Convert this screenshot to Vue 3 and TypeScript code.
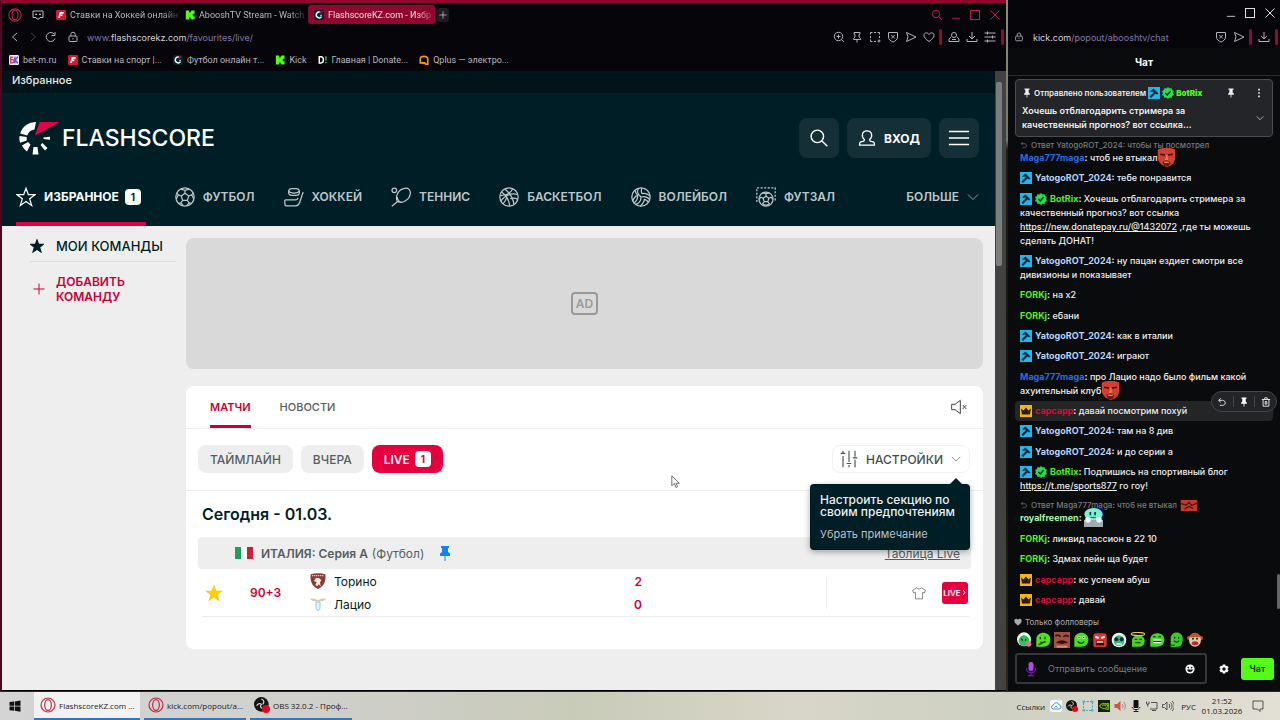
<script setup lang="ts">
import { ref } from 'vue'

interface Message {
  user: string
  tone: string
  badges?: string[]
  text?: string
  link?: string
  tail?: string
  emote?: string
  reply?: string
  replyEmote?: string
  hovered?: boolean
}

const tabs = [
  { icon: 'fav-f', title: 'Ставки на Хоккей онлайн', active: false },
  { icon: 'fav-k', title: 'AbooshTV Stream - Watch', active: false },
  { icon: 'fav-fs', title: 'FlashscoreKZ.com - Избр', active: true },
]

const bookmarks = [
  { icon: 'fav-bk', title: 'bet-m.ru' },
  { icon: 'fav-f', title: 'Ставки на спорт |...' },
  { icon: 'fav-fs', title: 'Футбол онлайн т...' },
  { icon: 'fav-k', title: 'Kick' },
  { icon: 'fav-d', title: 'Главная | Donate...' },
  { icon: 'fav-q', title: 'Qplus — электро...' },
]

const pageTools = [
  { icon: 'zoom', label: 'Масштаб' },
  { icon: 'pinned', label: 'Закрепить' },
  { icon: 'snapshot', label: 'Снимок' },
  { icon: 'shield', label: 'Блокировщик' },
  { icon: 'send', label: 'Отправить' },
  { icon: 'heart', label: 'В избранное' },
]
const appTools = [
  { icon: 'profile', label: 'Профиль' },
  { icon: 'download', label: 'Загрузки' },
  { icon: 'sliders', label: 'Настройки браузера' },
]

const sports = [
  { icon: 'football', title: 'ФУТБОЛ' },
  { icon: 'hockey', title: 'ХОККЕЙ' },
  { icon: 'tennis', title: 'ТЕННИС' },
  { icon: 'basketball', title: 'БАСКЕТБОЛ' },
  { icon: 'volleyball', title: 'ВОЛЕЙБОЛ' },
  { icon: 'futsal', title: 'ФУТЗАЛ' },
]

const teams = [
  { icon: 'torino', name: 'Торино', score: 2 },
  { icon: 'lazio', name: 'Лацио', score: 0 },
]

const messages: Message[] = [
  { user: 'Maga777maga', tone: 'blue', text: 'чтоб не втыкал', emote: 'emote-red', reply: 'Ответ YatogoROT_2024: чтобы ты посмотрел' },
  { user: 'YatogoROT_2024', tone: 'sky', badges: ['badge-mod'], text: 'тебе понравится' },
  { user: 'BotRix', tone: 'green', badges: ['badge-mod', 'badge-ok'], text: 'Хочешь отблагодарить стримера за качественный прогноз? вот ссылка', link: 'https://new.donatepay.ru/@1432072', tail: ',где ты можешь сделать ДОНАТ!' },
  { user: 'YatogoROT_2024', tone: 'sky', badges: ['badge-mod'], text: 'ну пацан ездиет смотри все дивизионы и показывает' },
  { user: 'FORKj', tone: 'green', text: 'на х2' },
  { user: 'FORKj', tone: 'green', text: 'ебани' },
  { user: 'YatogoROT_2024', tone: 'sky', badges: ['badge-mod'], text: 'как в италии' },
  { user: 'YatogoROT_2024', tone: 'sky', badges: ['badge-mod'], text: 'играют' },
  { user: 'Maga777maga', tone: 'blue', text: 'про Лацио надо было фильм какой ахуительный клуб', emote: 'emote-red' },
  { user: 'capcapp', tone: 'red', badges: ['badge-crown'], text: 'давай посмотрим похуй', hovered: true },
  { user: 'YatogoROT_2024', tone: 'sky', badges: ['badge-mod'], text: 'там на 8 див' },
  { user: 'YatogoROT_2024', tone: 'sky', badges: ['badge-mod'], text: 'и до серии а' },
  { user: 'BotRix', tone: 'green', badges: ['badge-mod', 'badge-ok'], text: 'Подпишись на спортивный блог', link: 'https://t.me/sports877', tail: 'го гоу!' },
  { user: 'royalfreemen', tone: 'mint', emote: 'emote-mint', reply: 'Ответ Maga777maga: чтоб не втыкал', replyEmote: 'emote-band' },
  { user: 'FORKj', tone: 'green', text: 'ликвид пассион в 22 10' },
  { user: 'FORKj', tone: 'green', text: '3дмах пейн ща будет' },
  { user: 'capcapp', tone: 'red', badges: ['badge-crown'], text: 'кс успеем абуш' },
  { user: 'capcapp', tone: 'red', badges: ['badge-crown'], text: 'давай' },
]

const quickEmotes = ['q-pink', 'q-think', 'q-photo', 'q-smile', 'q-angry', 'q-cool', 'q-angel', 'q-grin', 'q-wave', 'q-monkey']

const tasks = [
  { icon: 'opera', title: 'FlashscoreKZ.com ...', active: true },
  { icon: 'opera', title: 'kick.com/popout/a...', active: false },
  { icon: 'obs', title: 'OBS 32.0.2 - Проф...', active: false },
]
const tray = ['t-cloud', 'obs', 't-snip', 't-nv', 't-mute', 't-mic', 't-net', 't-vol']

const draft = ref('')
const showHint = ref(true)
</script>

<template>
  <svg class="defs" aria-hidden="true">
    <symbol id="opera" viewBox="0 0 24 24"><circle cx="12" cy="12" r="10.5" fill="none" stroke="#c4284c" stroke-width="1.8" /><ellipse cx="12" cy="12" rx="5" ry="8.2" fill="none" stroke="#c4284c" stroke-width="1.8" /></symbol>
    <symbol id="gx" viewBox="0 0 24 24"><path d="M2 4h20v13h-6l-2 3h-4l-2-3H2z" /><path d="M6 11h4M14 11h4M8 9v3M16 9v3" /></symbol>
    <symbol id="fav-f" viewBox="0 0 24 24"><rect width="24" height="24" rx="3" fill="#d31836" stroke="none" /><path d="M9 5h10l-1 4h-6l-.5 2H16l-1 3.500h-4.500L9.500 19H5z" fill="#fff" stroke="none" /></symbol>
    <symbol id="fav-k" viewBox="0 0 24 24"><path d="M2 1h8v5h3V3.500h2V1h8v8h-3v2.500h-2v1h2V15h3v8h-8v-2.500h-2V18h-3v5H2z" fill="#53fc18" stroke="none" /></symbol>
    <symbol id="fav-fs" viewBox="0 0 24 24"><rect width="24" height="24" rx="5" fill="#06262d" stroke="none" /><path d="M14 5a7 7 0 1 0 4 11" fill="none" stroke="#fff" stroke-width="3.500" /><path d="M14 3h8l-8 8z" fill="#c8003c" stroke="none" /><path d="M15 13h4" stroke="#fff" stroke-width="2" /></symbol>
    <symbol id="fav-bk" viewBox="0 0 24 24"><rect width="24" height="24" rx="3" fill="#ece8ff" stroke="none" /><path d="M10 5H4v14h4a4 4 0 0 0 0-8H4" fill="none" stroke="#d22d52" stroke-width="3" /><path d="M14 4v16M21 4l-6 8 6 8" fill="none" stroke="#6048d8" stroke-width="3.500" /></symbol>
    <symbol id="fav-d" viewBox="0 0 24 24"><path d="M3 4h4c8 0 8 15 0 15H3z" fill="none" stroke="#fff" stroke-width="3.500" /><path d="M19 3v10M19 16v4" stroke="#36a351" stroke-width="4" /></symbol>
    <symbol id="fav-q" viewBox="0 0 24 24"><path d="M3 19V10c0-9 18-9 18 0v12h-5l-2-3z" fill="none" stroke="#f7941d" stroke-width="4" /><path d="M8 20h5" stroke="#f7941d" stroke-width="4" /></symbol>
    <symbol id="back" viewBox="0 0 24 24"><path d="M16 4l-9 8 9 8" /></symbol>
    <symbol id="fwd" viewBox="0 0 24 24"><path d="M8 4l9 8-9 8" /></symbol>
    <symbol id="reload" viewBox="0 0 24 24"><path d="M20 15a9 9 0 1 1-1-8M20 2v7h-7" /></symbol>
    <symbol id="lock" viewBox="0 0 24 24"><rect x="4" y="10" width="16" height="11" rx="2" /><path d="M7.500 10V7a4.500 4.500 0 0 1 9 0v3M12 14v3" /></symbol>
    <symbol id="search" viewBox="0 0 24 24"><circle cx="10" cy="10" r="7.500" /><path d="M15.500 15.500L22 22" /></symbol>
    <symbol id="minimize" viewBox="0 0 24 24"><path d="M2 20h20" /></symbol>
    <symbol id="maximize" viewBox="0 0 24 24"><rect x="3" y="3" width="18" height="18" /></symbol>
    <symbol id="close" viewBox="0 0 24 24"><path d="M3 3l18 18M21 3L3 21" /></symbol>
    <symbol id="zoom" viewBox="0 0 24 24"><circle cx="11" cy="11" r="8.500" /><path d="M17 17l5 5M7 11h8M11 7v8" /></symbol>
    <symbol id="pinned" viewBox="0 0 24 24"><path d="M6 3h12v3l-2 1v5l3 3v2H5v-2l3-3V7L6 6zM12 17v6" /></symbol>
    <symbol id="snapshot" viewBox="0 0 24 24"><path d="M3 7V3h4M10 3h4M17 3h4v4M21 10v4M3 10v4M3 17v4h4M10 21h4M17 20h6M20 17v6" /></symbol>
    <symbol id="shield" viewBox="0 0 24 24"><path d="M3 3h18v9c0 5-4 8-9 10-5-2-9-5-9-10zM8.500 8l7 7M15.500 8l-7 7" /></symbol>
    <symbol id="send" viewBox="0 0 24 24"><path d="M3 3l19 9-19 9 3-9z" /></symbol>
    <symbol id="heart" viewBox="0 0 24 24"><path d="M12 21C5 16 2 13 2 8.500 2 3 9 2 12 7c3-5 10-4 10 1.500C22 13 19 16 12 21z" /></symbol>
    <symbol id="profile" viewBox="0 0 24 24"><circle cx="12" cy="8" r="5" /><path d="M6 12l-4 4v5h20v-5l-4-4M8 17h8" /></symbol>
    <symbol id="download" viewBox="0 0 24 24"><path d="M12 2v13M6 10l6 6 6-6M2 16v5h20v-5" /></symbol>
    <symbol id="sliders" viewBox="0 0 24 24"><path d="M1 4h22M1 12h22M1 20h22M7 1v6M17 9v6M7 17v6" /></symbol>

    <symbol id="logo" viewBox="0 0 45 34">
      <path d="M20 1A16 16 0 0 0 4.200 12.500l7 2A9 9 0 0 1 18.500 8.500zM3.500 15l7.200 1v3.500l-6.500 2.200c-.8-2-1-4-.7-6.700zM6 24.500l6-3.500 2.500 2.500-3.500 7c-2-1.500-3.500-3-5-6zM17.500 26h4l1 7.500h-6zM24.500 24l2-2 5 5-2.500 2.500zM27.500 16.500l6.500-.8v3l-6.500-.8z" fill="#fff" stroke="none" />
      <path d="M23.500 1h20L19 14.500z" fill="#e6004a" stroke="none" />
    </symbol>
    <symbol id="user" viewBox="0 0 24 24"><path d="M8.500 14C4 10 5 2.500 12 2.500S20 10 15.500 14l.5 2 5 1.500c1 1 1 3 1 4H2c0-1 0-3 1-4L8 16z" /></symbol>
    <symbol id="menu" viewBox="0 0 24 24"><path d="M1 5h22M1 12h22M1 19h22" /></symbol>
    <symbol id="star" viewBox="0 0 24 24"><path d="M12 1.500l2.800 7.700h8l-6.400 5 2.400 8L12 17.500 5.200 22.200l2.400-8-6.400-5h8z" /></symbol>
    <symbol id="football" viewBox="0 0 24 24"><circle cx="12" cy="12" r="11" /><path d="M12 7.500l4.500 3.300-1.700 5.200H9.200l-1.700-5.200zM12 7.500V4M16.500 10.800l3.500-1.500M14.800 16l2.200 3M9.200 16L7 19M7.500 10.800L4 9.300M7 2.500L12 4l5-1.500M22 7l-2 2.300 2.500 5M19.500 19.500L17 19l-3 3.500M10 22.500L7 19l-3 .5M1.500 14.500l2.500-5.200L2 7" /></symbol>
    <symbol id="hockey" viewBox="0 0 24 24"><rect x="5.500" y="2" width="13" height="8" rx="4" /><path d="M5.500 5c2 3 11 3 13 0M1 15.500h12.500c2 0 3-1 3.500-2.500M23 6l-4 12c-1 3-2 4.500-5 4.500H3c-1.500 0-2-1-2-2.500v-4.500" /></symbol>
    <symbol id="tennis" viewBox="0 0 24 24"><circle cx="4" cy="4" r="2.800" /><path d="M7.500 17C5 12 8 4 15 2c6-2 9 2 8 7-1 6-9 11-14 9zM8 17.500L1 23M7.500 12c.5 4 2 6 6 6.500" /></symbol>
    <symbol id="basketball" viewBox="0 0 24 24"><circle cx="12" cy="12" r="11" /><path d="M7 2.500c5 4 10 11 11 18.500M3 6c6 4 9 9 10 17M1.500 10c6 .5 12-2 15-8M2 17c5-7 12-10 20.500-8M5 20c2-2 3-4 4-7M22.500 15c-3-2-6-2-9-1" /></symbol>
    <symbol id="volleyball" viewBox="0 0 24 24"><circle cx="12" cy="12" r="11" /><path d="M12 12c-4-3-5-7-3-10.500M12 12c4-1 8 0 10.500 3M12 12c0 5-2 8-7 9M13 8c-1-2-1-4 0-7M13 8c4-1 7 0 10 3M8 10c-3 1-5 4-6 7M8 10c0 4-1 7-4 9M16 14.500c0 3-2 6-5 8.500M16 14.500c2 1 4 2 5 4M8 10C6 8 5 6 5 4" /></symbol>
    <symbol id="futsal" viewBox="0 0 24 24"><path d="M1 18V1h22v17" stroke-dasharray="2.500 1.800" /><circle cx="12" cy="14.500" r="8.500" /><path d="M12 11l3.500 2.500-1.300 4H9.800l-1.300-4zM12 11V8M15.500 13.500l3-1.500M14.200 17.500l2 3M9.800 17.500l-2 3M8.500 13.500l-3-1.500M8 7l4 1 4-1M18.500 12l1.500 3M5.500 12L4 15M7.800 20.500l4.200 1.500 4.200-1.500" /></symbol>
    <symbol id="chev" viewBox="0 0 24 24"><path d="M2 7l10 10L22 7" /></symbol>
    <symbol id="plus" viewBox="0 0 24 24"><path d="M12 1v22M1 12h22" /></symbol>
    <symbol id="muted" viewBox="0 0 24 24"><path d="M1 8h5l8-6v20l-8-6H1zM17.500 9l5.500 6M23 9l-5.500 6" /></symbol>
    <symbol id="tune" viewBox="0 0 24 24"><path d="M4 1v3M4 8v15M1 4.500h6M12 1v15M12 20v3M9 18h6M20 1v8M20 13v10M17 10.500h6" /></symbol>
    <symbol id="pushpin" viewBox="0 0 24 30"><path d="M4 0h16v4h-2v8l4 3v5H2v-5l4-3V4H4zM11 20h2v10h-2z" fill="#1384ec" stroke="none" /></symbol>
    <symbol id="shirt" viewBox="0 0 24 24"><path d="M8 3L1 7.500 3 12l3-1v11h12V11l3 1 2-4.500L16 3c-2 3-6 3-8 0z" /></symbol>
    <symbol id="torino" viewBox="0 0 24 24"><path d="M1 2c7-2 15-2 22 0 1 9-1 18-11 22C2 20 0 11 1 2z" fill="#8a3b32" stroke="none" /><path d="M3 4h18" stroke="#d9c8be" stroke-width="2" stroke-dasharray="2 1" /><path d="M8 18l2-4-4-2 3-5 5 1 3 3-2 3 1 6-3-3-2 3z" fill="#f6efe8" stroke="none" /></symbol>
    <symbol id="lazio" viewBox="0 0 24 24"><path d="M0 4c5-1 8 0 12 2 4-2 7-3 12-2-2 3-5 4-8 4H8C5 8 2 7 0 4z" fill="#d8cfa0" stroke="none" /><path d="M9 9h6v8c0 2-1 4-3 5-2-1-3-3-3-5z" fill="#e9f6fb" stroke="#8cc8e4" stroke-width="1.500" /></symbol>

    <symbol id="pin" viewBox="0 0 24 24"><path d="M6 1h12v3h-2v7l3 3v2h-6v7h-2v-7H5v-2l3-3V4H6z" fill="currentColor" stroke="none" /></symbol>
    <symbol id="dots" viewBox="0 0 24 24"><path d="M10 2h4v4h-4zM10 10h4v4h-4zM10 18h4v4h-4z" fill="currentColor" stroke="none" /></symbol>
    <symbol id="reply" viewBox="0 0 24 24"><path d="M9 3L4 8l5 5M4 8h9c9 0 9 12 0 12H7" /></symbol>
    <symbol id="trash" viewBox="0 0 24 24"><path d="M2 6h20M9 5V2h6v3M5 6v16h14V6M10 11h4v6h-4z" /></symbol>
    <symbol id="badge-mod" viewBox="0 0 24 24"><rect width="24" height="24" fill="#24b6e8" stroke="none" /><path d="M11 3l10 10-3 2-3-2-9 9-3-3 9-9-3-1-4 1v-2z" fill="#07293a" stroke="none" /></symbol>
    <symbol id="badge-ok" viewBox="0 0 24 24"><path d="M12 0l3 3 4-1 1 4 4 2-2 4 2 4-4 2-1 4-4-1-3 3-3-3-4 1-1-4-4-2 2-4-2-4 4-2 1-4 4 1z" fill="#22e050" stroke="none" /><path d="M6.500 12l4 4 7-8" fill="none" stroke="#06310f" stroke-width="3" /></symbol>
    <symbol id="badge-crown" viewBox="0 0 24 24"><rect width="24" height="24" fill="#f5b511" stroke="none" /><path d="M2 7l5 4 5-6 5 6 5-4-2 12H4z" fill="#2a1c02" stroke="none" /></symbol>
    <symbol id="emote-red" viewBox="0 0 24 24"><path d="M1 2C8-1 17-1 23 2v11c-1 6-5 10-10 11C6 23 2 18 1 13z" fill="#d3402f" stroke="none" /><path d="M4 8l6 1M14 9l6-1" stroke="#4b0d0a" stroke-width="2" /><path d="M12 9l1 5h-3" fill="none" stroke="#ff8263" stroke-width="1.500" /><path d="M7 18c3-3 7-3 10 0l-2 5H9z" fill="#6b1c1b" stroke="none" /><path d="M9 18h6" stroke="#f0937b" stroke-width="1.500" /></symbol>
    <symbol id="emote-mint" viewBox="0 0 24 24"><rect x="12" width="12" height="14" fill="#101a7a" stroke="none" /><ellipse cx="12" cy="8" rx="11.500" ry="8" fill="#7ff0cf" stroke="none" /><path d="M8 5v4M14 5v4" stroke="#0a3a30" stroke-width="2" /><path d="M8 12h7" stroke="#1c7a60" stroke-width="1.500" /><rect y="15" width="24" height="9" fill="#a4aab0" stroke="none" /><circle cx="5" cy="15" r="3.500" fill="#e8fff8" stroke="none" /><circle cx="19" cy="15" r="3.500" fill="#e8fff8" stroke="none" /></symbol>
    <symbol id="emote-band" viewBox="0 0 36 24"><rect width="36" height="24" fill="#c23a2c" stroke="none" /><path d="M0 8l12 3 6-6 6 7 12-5M8 20l10-6 9 5" fill="none" stroke="#5a1410" stroke-width="3" /></symbol>
    <symbol id="q-pink" viewBox="0 0 24 24"><circle cx="12" cy="11" r="10.500" fill="#e9f8ef" stroke="none" /><circle cx="12" cy="13" r="8" fill="#2fc15b" stroke="none" /><path d="M8 10l2 3M15 10l-1 3" stroke="#073815" stroke-width="2" /><circle cx="19" cy="18" r="4" fill="#ea6aa8" stroke="none" /></symbol>
    <symbol id="q-think" viewBox="0 0 24 24"><path d="M2 22V11C2-2 23-2 23 11c0 9-6 12-13 11z" fill="#53e01e" stroke="none" /><path d="M8 7v4M15 7v4M8 15c3 2 5 1 8-1M5 19l6-2" fill="none" stroke="#0d4a0a" stroke-width="2" /></symbol>
    <symbol id="q-photo" viewBox="0 0 24 24"><rect width="24" height="24" fill="#a34e46" stroke="none" /><path d="M2 6c3-2 6-1 8 1M14 7c3-2 6-2 8 0" fill="none" stroke="#3a1512" stroke-width="2.500" /><path d="M3 16c5-5 13-5 18 0l-9 2z" fill="#30120f" stroke="none" /><path d="M4 22h16" stroke="#d58c7d" stroke-width="3" /></symbol>
    <symbol id="q-smile" viewBox="0 0 24 24"><path d="M2 22V11C2-2 23-2 23 11c0 9-6 12-13 11z" fill="#45e01e" stroke="none" /><path d="M7 8h4M14 8h4" stroke="#fff" stroke-width="3.500" /><path d="M8 8h2M15 8h2M7 14c3 4 7 4 10 0" fill="none" stroke="#0d4a0a" stroke-width="2" /></symbol>
    <symbol id="q-angry" viewBox="0 0 24 24"><rect x="2" y="2" width="20" height="21" rx="4" fill="#d8352f" stroke="none" /><path d="M5 7l5 2M19 7l-5 2" stroke="#fff" stroke-width="3" /><rect x="6" y="13" width="12" height="7" fill="#3a0806" stroke="none" /><path d="M7 15h10" stroke="#fff" stroke-width="2" /></symbol>
    <symbol id="q-cool" viewBox="0 0 24 24"><circle cx="12" cy="12" r="11" fill="#e9f8ef" stroke="none" /><circle cx="12" cy="13" r="8" fill="#36b77e" stroke="none" /><circle cx="8" cy="11" r="3" fill="#18233a" stroke="none" /><circle cx="16" cy="11" r="3" fill="#18233a" stroke="none" /><path d="M8 18h8" stroke="#fff" stroke-width="2" /></symbol>
    <symbol id="q-angel" viewBox="0 0 24 24"><path d="M3 22V13C3 2 22 2 22 13c0 8-6 10-12 9z" fill="#4ed021" stroke="none" /><ellipse cx="12" cy="3" rx="10" ry="2.500" fill="none" stroke="#e7c260" stroke-width="1.800" /><path d="M7 11h4M14 11h4M8 16h8" stroke="#0d4a0a" stroke-width="2" /></symbol>
    <symbol id="q-grin" viewBox="0 0 24 24"><path d="M2 22V11C2-1 23-1 23 11c0 9-6 12-13 11z" fill="#45d628" stroke="none" /><rect x="6" y="11" width="13" height="6" rx="2" fill="#e8ffe0" stroke="none" /><path d="M6 7h4M14 7h4M6 14h13" stroke="#0d4a0a" stroke-width="1.800" /></symbol>
    <symbol id="q-wave" viewBox="0 0 24 24"><path d="M4 23V9C5-2 22-2 22 10c0 8-3 12-8 12z" fill="#3ccb2c" stroke="none" /><path d="M10 7v3M16 7v3M9 13c2 3 6 3 8 0M2 20h8" fill="none" stroke="#0d4a0a" stroke-width="2" /></symbol>
    <symbol id="q-monkey" viewBox="0 0 24 24"><circle cx="3" cy="9" r="3" fill="#b3563c" stroke="none" /><circle cx="21" cy="9" r="3" fill="#b3563c" stroke="none" /><ellipse cx="12" cy="12" rx="9" ry="10" fill="#e6c99c" stroke="none" /><path d="M3 8c3-9 15-9 18 0" fill="#b3563c" stroke="none" /><circle cx="9" cy="10" r="1.500" fill="#222" stroke="none" /><circle cx="15" cy="10" r="1.500" fill="#222" stroke="none" /><ellipse cx="12" cy="17" rx="5" ry="3" fill="#c22a2a" stroke="none" /></symbol>
    <symbol id="mic" viewBox="0 0 24 30"><rect x="7" y="1" width="10" height="18" rx="5" fill="#b04ae0" stroke="none" /><path d="M3 13c0 13 18 13 18 0M12 23v5M6 28h12" fill="none" stroke="#7a18b8" stroke-width="2.500" /></symbol>
    <symbol id="smiley" viewBox="0 0 24 24"><circle cx="12" cy="12" r="11" fill="#fff" stroke="none" /><circle cx="8" cy="8.500" r="2" fill="#111" stroke="none" /><circle cx="16" cy="8.500" r="2" fill="#111" stroke="none" /><path d="M5 13h14c-1 8-13 8-14 0z" fill="#111" stroke="none" /></symbol>
    <symbol id="gear" viewBox="0 0 24 24"><path d="M9 1h6l1 4 4-1 3 5-3 3 3 3-3 5-4-1-1 4H9l-1-4-4 1-3-5 3-3-3-3 3-5 4 1zM12 8a4 4 0 1 0 0 8 4 4 0 0 0 0-8z" fill="#fff" fill-rule="evenodd" stroke="none" /></symbol>
    <symbol id="heart-fill" viewBox="0 0 24 24"><path d="M12 23C5 17 1 13 1 8c0-7 9-8 11-2 2-6 11-5 11 2 0 5-4 9-11 15z" fill="#aaa" stroke="none" /></symbol>

    <symbol id="windows" viewBox="0 0 24 24"><path d="M1 4l9-1v8.500H1zM11.500 2.800L23 1v10.500H11.500zM1 13h9v8.500l-9-1zM11.500 13H23v10.500l-11.500-1.800z" fill="#111" stroke="none" /></symbol>
    <symbol id="obs" viewBox="0 0 24 24"><circle cx="11" cy="11" r="11" fill="#151515" stroke="none" /><path d="M11 3c4 1 5 5 2 8M4 13c2-4 6-4 8-1M15 17c-3 1-6-1-5-5" fill="none" stroke="#d8d8d8" stroke-width="1.800" /><circle cx="18" cy="18" r="6" fill="#e3091b" stroke="none" /></symbol>
    <symbol id="t-cloud" viewBox="0 0 24 24"><rect width="24" height="24" rx="4" fill="#f7fbff" stroke="none" /><path d="M7 18a4 4 0 0 1 0-8c1-6 10-6 11 0a4 4 0 0 1 0 8zM9 15l3-3 3 3" fill="none" stroke="#3185e6" stroke-width="1.800" /></symbol>
    <symbol id="t-snip" viewBox="0 0 24 24"><rect x="3" y="3" width="18" height="18" fill="none" stroke="#47a0c8" stroke-width="2" stroke-dasharray="4 2.500" /><path d="M1 1h5v5H1zM18 18h5v5h-5zM1 18h5v5H1zM18 1h5v5h-5z" fill="#5db3d6" stroke="none" /></symbol>
    <symbol id="t-nv" viewBox="0 0 24 24"><rect width="24" height="24" fill="#16200f" stroke="none" /><path d="M3 12c5-7 12-7 17 0-5 7-12 7-17 0zM9 12c1-3 5-3 6 0M13 7h8v11h-6" fill="none" stroke="#6db200" stroke-width="2.500" /></symbol>
    <symbol id="t-mute" viewBox="0 0 24 24"><path d="M1 8h5l7-6v20l-7-6H1z" fill="#d4553f" stroke="none" /><path d="M16 8c3 2 3 6 0 8M19 4c5 4 5 12 0 16" fill="none" stroke="#9a8f86" stroke-width="2" /></symbol>
    <symbol id="t-mic" viewBox="0 0 24 24"><rect x="7" y="0" width="10" height="16" rx="2" fill="#111" stroke="none" /><path d="M4 14c2 7 14 7 16 0M12 18v4M7 23h10" fill="none" stroke="#222" stroke-width="2" /></symbol>
    <symbol id="t-net" viewBox="0 0 24 24"><path d="M1 3v5h5V3M3.500 8v5M10 5h12v13H8M12 21h8" fill="none" stroke="#444" stroke-width="1.800" /></symbol>
    <symbol id="t-vol" viewBox="0 0 24 24"><path d="M1 9h4l5-5v16l-5-5H1zM14 8c2 2 2 6 0 8M17 5c4 4 4 10 0 14M20 2c6 6 6 14 0 20" fill="none" stroke="#333" stroke-width="1.600" /></symbol>
    <symbol id="t-note" viewBox="0 0 24 24"><path d="M2 2h20v16h-6v5l-5-5H2z" fill="none" stroke="#333" stroke-width="1.600" /></symbol>
  </svg>

  <div class="desktop">
    <main class="windows">
      <section class="browser" aria-label="Браузер">
        <div class="tabbar">
          <button class="plain" aria-label="Меню Opera"><svg class="i14"><use href="#opera" /></svg></button>
          <button class="plain gx" aria-label="GX"><svg class="i12"><use href="#gx" /></svg></button>
          <div class="tabs">
            <a v-for="t in tabs" :key="t.title" href="#" class="tab" :class="{ active: t.active }">
              <svg class="i10"><use :href="'#' + t.icon" /></svg><span>{{ t.title }}</span>
            </a>
          </div>
          <button class="plain add" aria-label="Новая вкладка"><svg class="i8"><use href="#plus" /></svg></button>
          <div class="winctl crimson">
            <button class="plain" aria-label="Поиск"><svg class="i12"><use href="#search" /></svg></button>
            <button class="plain" aria-label="Свернуть"><svg class="i10"><use href="#minimize" /></svg></button>
            <button class="plain" aria-label="Развернуть"><svg class="i12"><use href="#maximize" /></svg></button>
            <button class="plain" aria-label="Закрыть"><svg class="i12"><use href="#close" /></svg></button>
          </div>
        </div>

        <div class="address">
          <button class="plain" aria-label="Назад"><svg class="i12"><use href="#back" /></svg></button>
          <button class="plain dim" aria-label="Вперёд"><svg class="i12"><use href="#fwd" /></svg></button>
          <button class="plain" aria-label="Обновить"><svg class="i12"><use href="#reload" /></svg></button>
          <svg class="i12 lock"><use href="#lock" /></svg>
          <a class="url" href="#">www.<b>flashscorekz.com</b>/favourites/live/</a>
          <div class="tools">
            <button v-for="t in pageTools" :key="t.icon" class="plain" :aria-label="t.label"><svg class="i12"><use :href="'#' + t.icon" /></svg></button>
            <i class="bar"></i>
            <button v-for="t in appTools" :key="t.icon" class="plain" :aria-label="t.label"><svg class="i12"><use :href="'#' + t.icon" /></svg></button>
            <i class="bar"></i>
          </div>
        </div>

        <nav class="bookmarks" aria-label="Закладки">
          <a v-for="b in bookmarks" :key="b.title" href="#"><svg class="i10"><use :href="'#' + b.icon" /></svg>{{ b.title }}</a>
        </nav>

        <div class="viewport">
          <div class="page">
            <div class="strip">Избранное</div>
            <header class="head">
              <div class="brandrow">
                <a class="brand" href="#"><svg class="mark"><use href="#logo" /></svg>FLASHSCORE</a>
                <div class="actions">
                  <button class="hbtn" aria-label="Поиск по сайту"><svg class="i20"><use href="#search" /></svg></button>
                  <button class="hbtn login"><svg class="i18"><use href="#user" /></svg>ВХОД</button>
                  <button class="hbtn" aria-label="Меню"><svg class="i22"><use href="#menu" /></svg></button>
                </div>
              </div>
              <nav class="sports" aria-label="Виды спорта">
                <a class="sport current" href="#"><svg class="i20"><use href="#star" /></svg>ИЗБРАННОЕ<span class="count">1</span></a>
                <a v-for="s in sports" :key="s.icon" class="sport" href="#"><svg class="i20"><use :href="'#' + s.icon" /></svg>{{ s.title }}</a>
                <button class="sport more">БОЛЬШЕ<svg class="i12"><use href="#chev" /></svg></button>
              </nav>
            </header>

            <div class="body">
              <aside class="side">
                <h2><svg class="i14 solid"><use href="#star" /></svg>МОИ КОМАНДЫ</h2>
                <button class="addteam"><svg class="i12"><use href="#plus" /></svg><span>ДОБАВИТЬ<br>КОМАНДУ</span></button>
              </aside>
              <div class="content">
                <div class="ad"><span>AD</span></div>
                <section class="card">
                  <div class="cardtabs">
                    <a href="#" class="on">МАТЧИ</a>
                    <a href="#">НОВОСТИ</a>
                    <button class="plain mute" aria-label="Звук"><svg class="i16"><use href="#muted" /></svg></button>
                  </div>
                  <div class="filters">
                    <button class="chip">ТАЙМЛАЙН</button>
                    <button class="chip">ВЧЕРА</button>
                    <button class="chip live">LIVE<span class="count">1</span></button>
                    <div class="settings">
                      <button class="setbtn"><svg class="i18"><use href="#tune" /></svg>НАСТРОЙКИ<svg class="i10 drop"><use href="#chev" /></svg></button>
                      <div v-if="showHint" class="hint" role="tooltip">
                        <p>Настроить секцию по своим предпочтениям</p>
                        <button @click="showHint = false">Убрать примечание</button>
                      </div>
                    </div>
                  </div>
                  <h1>Сегодня - 01.03.</h1>
                  <div class="league">
                    <i class="flag"></i>
                    <b>ИТАЛИЯ: Серия А</b><span>(Футбол)</span>
                    <button class="plain" aria-label="Закрепить турнир"><svg class="push"><use href="#pushpin" /></svg></button>
                    <a href="#">Таблица Live</a>
                  </div>
                  <article class="match">
                    <button class="plain fav" aria-label="Убрать из избранного"><svg class="i20"><use href="#star" /></svg></button>
                    <span class="minute">90+3</span>
                    <div class="teams">
                      <div v-for="t in teams" :key="t.name" class="team"><svg class="i16"><use :href="'#' + t.icon" /></svg>{{ t.name }}</div>
                    </div>
                    <div class="scores"><b v-for="t in teams" :key="t.name">{{ t.score }}</b></div>
                    <div class="extras">
                      <svg class="i14 shirt"><use href="#shirt" /></svg>
                      <a class="livebtn" href="#">LIVE<svg><use href="#fwd" /></svg></a>
                    </div>
                  </article>
                </section>
              </div>
            </div>
          </div>
          <div class="scroll" aria-hidden="true"><i></i></div>
        </div>
      </section>

      <section class="chat" aria-label="Чат Kick">
        <div class="winctl top">
          <button class="plain" aria-label="Свернуть"><svg class="i10"><use href="#minimize" /></svg></button>
          <button class="plain" aria-label="Развернуть"><svg class="i12"><use href="#maximize" /></svg></button>
          <button class="plain" aria-label="Закрыть"><svg class="i12"><use href="#close" /></svg></button>
        </div>
        <div class="address slim">
          <svg class="i10"><use href="#lock" /></svg>
          <a class="url" href="#"><b>kick.com</b>/popout/abooshtv/chat</a>
          <div class="tools">
            <button class="plain" aria-label="Блокировщик"><svg class="i12"><use href="#shield" /></svg></button>
            <button class="plain" aria-label="Отправить"><svg class="i12"><use href="#send" /></svg></button>
            <i class="bar"></i>
            <button class="plain" aria-label="Загрузки"><svg class="i12"><use href="#download" /></svg></button>
            <i class="bar"></i>
          </div>
        </div>
        <h2 class="title">Чат</h2>

        <div class="feed">
          <div class="pinbox">
            <div class="pinhead">
              <svg class="i10"><use href="#pin" /></svg>Отправлено пользователем
              <svg class="i12"><use href="#badge-mod" /></svg><svg class="i12"><use href="#badge-ok" /></svg><b class="green">BotRix</b>
              <button class="plain first" aria-label="Открепить"><svg class="i10"><use href="#pin" /></svg></button>
              <button class="plain" aria-label="Ещё"><svg class="i10"><use href="#dots" /></svg></button>
            </div>
            <div class="pintext">
              <p>Хочешь отблагодарить стримера за качественный прогноз? вот ссылка…</p>
              <button class="plain" aria-label="Развернуть сообщение"><svg class="i8"><use href="#chev" /></svg></button>
            </div>
          </div>

          <div class="messages">
            <div v-for="(m, n) in messages" :key="n" class="msg" :class="{ hovered: m.hovered }">
              <div v-if="m.reply" class="replyto"><svg class="i8"><use href="#reply" /></svg>{{ m.reply }}<svg v-if="m.replyEmote" class="band"><use :href="'#' + m.replyEmote" /></svg></div>
              <div class="line"><svg v-for="b in m.badges" :key="b" class="badge"><use :href="'#' + b" /></svg><b :class="m.tone">{{ m.user }}</b><b>:</b> {{ m.text }}<template v-if="m.link">{{ ' ' }}<a href="#">{{ m.link }}</a> {{ m.tail }}</template><svg v-if="m.emote" class="emote"><use :href="'#' + m.emote" /></svg></div>
              <div v-if="m.hovered" class="hovertools">
                <button class="plain" aria-label="Ответить"><svg class="i10"><use href="#reply" /></svg></button>
                <button class="plain" aria-label="Закрепить"><svg class="i10"><use href="#pin" /></svg></button>
                <button class="plain" aria-label="Удалить"><svg class="i10"><use href="#trash" /></svg></button>
              </div>
            </div>
          </div>
        </div>

        <div class="followers"><svg class="i8"><use href="#heart-fill" /></svg>Только фолловеры</div>
        <div class="quick">
          <button v-for="q in quickEmotes" :key="q" class="plain" :aria-label="q"><svg><use :href="'#' + q" /></svg></button>
        </div>
        <form class="compose" @submit.prevent>
          <div class="field">
            <svg class="mic"><use href="#mic" /></svg>
            <input v-model="draft" type="text" placeholder="Отправить сообщение" aria-label="Отправить сообщение">
            <button type="button" class="plain" aria-label="Эмоции"><svg class="i10"><use href="#smiley" /></svg></button>
          </div>
          <button type="button" class="plain" aria-label="Настройки чата"><svg class="i10"><use href="#gear" /></svg></button>
          <button class="sendbtn">Чат</button>
        </form>
        <i class="chatscroll" aria-hidden="true"></i>
      </section>
    </main>

    <footer class="taskbar">
      <button class="plain start" aria-label="Пуск"><svg class="i12"><use href="#windows" /></svg></button>
      <button v-for="t in tasks" :key="t.title" class="task" :class="{ active: t.active }"><svg class="i16"><use :href="'#' + t.icon" /></svg>{{ t.title }}</button>
      <div class="tray">
        <span class="links">Ссылки</span>
        <svg v-for="t in tray" :key="t" class="i12"><use :href="'#' + t" /></svg>
        <span class="lang">РУС</span>
        <time><span>21:52</span><span>01.03.2026</span></time>
        <svg class="i12"><use href="#t-note" /></svg>
      </div>
    </footer>

    <svg class="cursor" viewBox="0 0 12 18" aria-hidden="true"><path d="M1 1v12l3-3 2 5 2-1-2-4h4z" fill="#fff" stroke="#555" /></svg>
  </div>
</template>

<style>
body {
  background: #000;
}
</style>

<style scoped>
.defs {
  position: absolute;
  width: 0;
  height: 0;
}
.desktop {
  position: relative;
  display: flex;
  flex-direction: column;
  min-height: 100vh;
  font-family: Inter, "Liberation Sans", sans-serif;
  font-size: 9px;
  color: #ddd;
}
.desktop *,
.desktop *::before {
  box-sizing: border-box;
}
svg {
  display: block;
  flex: none;
  fill: none;
  stroke: currentColor;
  stroke-width: 2;
}
a {
  color: inherit;
  text-decoration: none;
}
button,
input {
  font: inherit;
  color: inherit;
  border: 0;
  padding: 0;
  background: none;
}
h1,
h2,
p {
  margin: 0;
}
.plain {
  display: flex;
  align-items: center;
  justify-content: center;
}
.i8 { width: 8px; height: 8px; }
.i10 { width: 10px; height: 10px; }
.i12 { width: 12px; height: 12px; }
.i14 { width: 14px; height: 14px; }
.i16 { width: 16px; height: 16px; }
.i18 { width: 18px; height: 18px; }
.i20 { width: 20px; height: 20px; }
.i22 { width: 22px; height: 22px; }

.windows {
  flex: 1;
  display: grid;
  grid-template-columns: minmax(0, 1fr) 272px;
  gap: 2px;
  padding-bottom: 1px;
  background: linear-gradient(#8a8a80 0, #77776c 140px, #1c1e16 150px, #12140e 480px, #30281a 100%);
}

/* browser window */
.browser {
  display: flex;
  flex-direction: column;
  background: #060509;
  border-left: 2px solid #4d0820;
  border-top: 3px solid #92052f;
  border-bottom: 1px solid #000;
}
.tabbar {
  display: flex;
  align-items: center;
  height: 23px;
  padding: 0 5px 0 6px;
}
.gx {
  margin: 0 6px 0 10px;
  color: #bbb;
}
.tabs {
  display: flex;
  font-family: Roboto, sans-serif;
}
.tab {
  display: flex;
  align-items: center;
  gap: 4px;
  width: 129px;
  height: 19px;
  padding: 0 6px;
  border-radius: 3px;
  color: #b9b6bf;
}
.tab span {
  white-space: nowrap;
  mask-image: linear-gradient(90deg, #000 85%, #0004);
}
.tab.active {
  width: 127px;
  background: #8f0630;
  color: #f4dbe3;
}
.add {
  width: 12px;
  height: 14px;
  margin-left: 2px;
  background: #1d1b24;
  border-radius: 3px;
}
.winctl {
  display: flex;
  gap: 8px;
  margin-left: auto;
}
.crimson {
  color: #c21b48;
}
.address {
  display: flex;
  align-items: center;
  height: 22px;
  padding-left: 7px;
  gap: 6px;
  color: #b4b2ba;
}
.dim {
  opacity: 0.35;
}
.lock {
  margin: 0 2px 0 4px;
}
.url {
  color: #8078a8;
}
.url b {
  font-weight: 400;
  color: #d2d0d8;
}
.tools {
  display: flex;
  align-items: center;
  gap: 6px;
  margin-left: auto;
}
.bar {
  width: 3px;
  height: 16px;
  margin: 0 0 0 -2px;
  border-radius: 2px;
  background: #8f0a35;
}
.tools .bar:last-child {
  margin: 0 2px 0 -1px;
}
.bookmarks {
  display: flex;
  align-items: center;
  gap: 11px;
  height: 23px;
  padding-left: 7px;
  color: #b9b6bf;
  font-family: Roboto, sans-serif;
}
.bookmarks a {
  display: flex;
  align-items: center;
  gap: 4px;
}

.viewport {
  flex: 1;
  display: flex;
}
.page {
  flex: 1;
  min-width: 0;
  display: flex;
  flex-direction: column;
  background: #eee;
}
.scroll {
  width: 11px;
  padding: 11px 4px 0 1px;
  background: #424242;
}
.scroll i {
  display: block;
  height: 184px;
  border-radius: 2px;
  background: #7d7d7d;
}
.strip {
  height: 22px;
  padding-left: 10px;
  background: #011419;
  color: #e5e8e8;
  font-size: 11px;
  font-weight: 500;
  line-height: 18px;
}
.head {
  padding: 0 16px 0 14px;
  background: #001e26;
  color: #fff;
}
.brandrow {
  display: flex;
  align-items: center;
  justify-content: space-between;
  height: 80px;
  padding-top: 10px;
}
.brand {
  display: flex;
  align-items: center;
  gap: 1px;
  font-size: 23px;
  font-weight: 500;
}
.mark {
  width: 45px;
  height: 34px;
}
.actions {
  display: flex;
  gap: 8px;
}
.hbtn {
  display: flex;
  align-items: center;
  justify-content: center;
  width: 40px;
  height: 40px;
  border-radius: 8px;
  background: #142f36;
}
.hbtn svg {
  stroke-width: 1.7;
}
.login {
  width: 84px;
  gap: 8px;
  font-size: 12px;
  font-weight: 700;
}
.sports {
  display: flex;
  gap: 29px;
  height: 53px;
}
.sport {
  display: flex;
  align-items: center;
  gap: 8px;
  padding-bottom: 6px;
  color: #bcc6c9;
  font-size: 12px;
  font-weight: 600;
}
.sport svg {
  stroke-width: 1.5;
}
.sport.current {
  padding: 4px 5px 6px 0;
  border-bottom: 4px solid #e6003f;
  color: #fff;
  font-weight: 700;
}
.count {
  display: flex;
  align-items: center;
  justify-content: center;
  width: 16px;
  height: 16px;
  border-radius: 4px;
  background: #fff;
  color: #001e26;
  font-size: 10px;
  font-weight: 700;
}
.sport .count {
  margin-left: -2px;
}
.sport.more {
  margin-left: auto;
}

.body {
  flex: 1;
  display: grid;
  grid-template-columns: 146px minmax(0, 1fr);
  gap: 10px;
  padding: 12px 12px 40px 28px;
}
.side h2 {
  display: flex;
  align-items: center;
  gap: 12px;
  height: 24px;
  padding-bottom: 8px;
  border-bottom: 1px solid #ddd;
  color: #001e26;
  font-size: 13px;
  font-weight: 500;
  white-space: nowrap;
}
.solid {
  fill: currentColor;
}
.addteam {
  display: flex;
  align-items: center;
  gap: 11px;
  margin-top: 12px;
  padding-left: 3px;
  color: #c80037;
  font-size: 12px;
  font-weight: 600;
  line-height: 15px;
  text-align: left;
}
.ad {
  display: flex;
  align-items: center;
  justify-content: center;
  height: 131px;
  border-radius: 8px;
  background: #d9d9d9;
}
.ad span {
  padding: 0 3px;
  border: 2px solid #999;
  border-radius: 4px;
  color: #999;
  font-size: 12px;
  font-weight: 600;
  line-height: 19px;
}
.card {
  padding-bottom: 32px;
  margin-top: 17px;
  border-radius: 8px;
  background: #fff;
  color: #001e26;
}
.cardtabs {
  display: flex;
  align-items: stretch;
  gap: 29px;
  height: 43px;
  padding: 0 16px 0 24px;
  border-bottom: 1px solid #eee;
}
.cardtabs a {
  padding-top: 14px;
  color: #555e61;
  font-size: 11px;
  font-weight: 500;
}
.cardtabs .on {
  border-bottom: 3px solid #c80037;
  color: #c80037;
  font-weight: 600;
}
.mute {
  margin-left: auto;
  color: #444;
}
.mute svg {
  stroke-width: 1.5;
}
.filters {
  display: flex;
  gap: 8px;
  height: 62px;
  padding: 16px 13px 16px 12px;
  border-bottom: 1px solid #eee;
}
.chip {
  display: flex;
  align-items: center;
  gap: 5px;
  height: 28px;
  padding: 0 12px;
  border-radius: 8px;
  background: #eee;
  color: #555e61;
  font-size: 12px;
  font-weight: 500;
}
.live {
  background: #e6003f;
  color: #fff;
  font-weight: 600;
}
.live .count {
  color: #c80037;
}
.settings {
  position: relative;
  margin-left: auto;
}
.setbtn {
  display: flex;
  align-items: center;
  gap: 8px;
  height: 28px;
  padding: 0 8px 0 7px;
  border: 1px solid #f2f2f2;
  border-radius: 8px;
  color: #444e51;
  font-size: 12px;
  font-weight: 500;
}
.setbtn svg {
  stroke-width: 1.5;
}
.hint {
  position: absolute;
  z-index: 2;
  top: 39px;
  right: 0;
  width: 160px;
  padding: 10px;
  border-radius: 4px;
  background: #001e26;
  color: #eee;
  box-shadow: 0 2px 6px #0005;
}
.hint::before {
  content: "";
  position: absolute;
  top: -6px;
  right: 8px;
  border: 6px solid transparent;
  border-top: 0;
  border-bottom-color: #001e26;
}
.hint p {
  font-size: 12px;
  font-weight: 500;
  line-height: 12px;
}
.hint button {
  margin-top: 12px;
  color: #b8c0c2;
  font-size: 11px;
  line-height: 9px;
  white-space: nowrap;
}
h1 {
  padding: 0 16px;
  font-size: 16px;
  font-weight: 600;
  line-height: 46px;
}
.league {
  display: flex;
  align-items: center;
  gap: 4px;
  height: 32px;
  margin: 0 12px;
  padding: 0 11px 0 37px;
  border-radius: 4px;
  background: #eee;
  color: #555e61;
  font-size: 12px;
}
.league b {
  font-weight: 600;
}
.league a {
  margin-left: auto;
  text-decoration: underline;
}
.flag {
  width: 18px;
  height: 12px;
  margin-right: 4px;
  background: linear-gradient(90deg, #1fa05c 33%, #fff 33%, #fff 67%, #c9203c 67%);
}
.push {
  width: 12px;
  height: 17px;
  margin-left: 11px;
}
.match {
  display: grid;
  grid-template-columns: 24px 84px minmax(0, 1fr) 20px 327px;
  align-items: center;
  height: 48px;
  margin: 0 14px 0 16px;
  border-bottom: 1px solid #eee;
}
.fav {
  color: #ffcd00;
}
.fav svg {
  fill: currentColor;
  stroke: none;
}
.minute {
  padding-left: 24px;
  color: #c80037;
  font-size: 12px;
  font-weight: 600;
}
.team {
  display: flex;
  align-items: center;
  gap: 8px;
  height: 23px;
  font-size: 12px;
}
.scores b {
  display: block;
  color: #c80037;
  font-size: 12px;
  font-weight: 600;
  line-height: 23px;
  text-align: right;
}
.extras {
  display: flex;
  align-items: center;
  justify-content: flex-end;
  gap: 16px;
  height: 32px;
  margin-left: 184px;
  padding-right: 1px;
  border-left: 1px solid #eee;
}
.shirt {
  color: #777;
  stroke-width: 1.5;
}
.livebtn {
  display: flex;
  align-items: center;
  justify-content: center;
  width: 26px;
  height: 22px;
  border-radius: 3px;
  background: #e6003f;
  color: #fff;
  font-size: 8px;
  font-weight: 600;
}
.livebtn svg {
  width: 6px;
  height: 9px;
  stroke-width: 4;
}

/* chat window */
.chat {
  position: relative;
  display: flex;
  flex-direction: column;
  background: #0a0b0c;
}
.top {
  align-self: stretch;
  align-items: center;
  justify-content: flex-end;
  height: 26px;
  margin-left: 0;
  padding-right: 4px;
  background: #060509;
}
.slim {
  padding-left: 6px;
  gap: 9px;
  background: #060509;
}
.title {
  height: 28px;
  border-bottom: 1px solid #2b2b2b;
  color: #fff;
  font-size: 10px;
  font-weight: 700;
  line-height: 28px;
  text-align: center;
}
.feed {
  flex: 1;
  display: flex;
  flex-direction: column;
  padding: 3px 7px 0;
  color: #eee;
}
.pinbox {
  padding: 6px 8px 4px 6px;
  border: 1px solid #4a4c50;
  border-radius: 4px;
  background: #232528;
  font-weight: 600;
}
.pinhead {
  display: flex;
  align-items: center;
  gap: 2px;
  height: 14px;
  font-size: 8px;
  font-weight: 600;
}
.pinhead .first {
  margin: 0 16px 0 auto;
}
.pintext {
  display: flex;
  align-items: center;
  justify-content: space-between;
  margin-top: 4px;
}
.pintext p {
  width: 190px;
  line-height: 14px;
}
.messages {
  flex: 1;
  display: flex;
  flex-direction: column;
  justify-content: space-between;
  padding: 2px 0 9px;
}
.msg {
  position: relative;
  padding-left: 5px;
  font-weight: 500;
  line-height: 14px;
}
.line {
  position: relative;
}
.msg b {
  font-weight: 700;
}
.msg a {
  text-decoration: underline;
}
.hovered::before {
  content: "";
  position: absolute;
  inset: -3px 0;
  border-radius: 4px;
  background: #ffffff1c;
}
.blue { color: #2b6be0; }
.sky { color: #b4d2fa; }
.green { color: #53f02c; }
.red { color: #d80a3c; }
.mint { color: #a6f5b0; }
.badge {
  display: inline-block;
  width: 12px;
  height: 12px;
  margin: -1px 3px -1px 0;
  vertical-align: -2px;
}
.emote {
  display: inline-block;
  width: 19px;
  height: 19px;
  margin: -9px 0;
  vertical-align: 3px;
}
.band {
  width: 18px;
  height: 11px;
}
.replyto {
  display: flex;
  align-items: center;
  gap: 3px;
  height: 12px;
  color: #77797c;
  font-size: 8px;
  font-weight: 500;
}
.hovertools {
  position: absolute;
  z-index: 1;
  top: -13px;
  right: -4px;
  display: flex;
  width: 66px;
  height: 21px;
  border: 1px solid #45474b;
  border-radius: 11px;
  background: #222427;
  color: #fff;
}
.hovertools button {
  flex: 1;
}
.hovertools button + button {
  border-left: 1px solid #45474b;
  margin: 4px 0;
}
.followers {
  display: flex;
  align-items: center;
  gap: 3px;
  height: 12px;
  padding-left: 6px;
  color: #aaa;
  font-size: 8px;
}
.quick {
  display: flex;
  gap: 3px;
  padding: 4px 8px 5px;
}
.quick svg {
  width: 16px;
  height: 16px;
}
.compose {
  display: flex;
  align-items: center;
  justify-content: space-between;
  padding: 0 6px 7px 7px;
}
.field {
  display: flex;
  align-items: center;
  gap: 11px;
  width: 192px;
  height: 31px;
  padding: 0 10px 0 8px;
  border: 2px solid #35373a;
  border-radius: 3px;
}
.mic {
  width: 12px;
  height: 16px;
}
.field input {
  flex: 1;
  min-width: 0;
  outline: 0;
}
.field input::placeholder {
  color: #7b7e82;
  opacity: 1;
}
.sendbtn {
  width: 33px;
  height: 22px;
  border-radius: 3px;
  background: #53fc18;
  color: #0b2a04;
  font-weight: 600;
}
.chatscroll {
  position: absolute;
  right: 0;
  bottom: 82px;
  width: 3px;
  height: 35px;
  border-radius: 2px;
  background: #666;
}

/* taskbar */
.taskbar {
  display: flex;
  align-items: center;
  gap: 4px;
  height: 28px;
  padding-right: 16px;
  background: linear-gradient(90deg, #d4d4d4, #cfcfcb 25%, #c9cbb9 45%, #d8d6c8 62%, #cdd0c2 78%, #e2dfd4);
  color: #222;
  font-family: "Open Sans", "Noto Sans", sans-serif;
  font-size: 8px;
}
.start {
  width: 30px;
}
.task {
  display: flex;
  align-items: center;
  gap: 3px;
  width: 102px;
  height: 28px;
  padding: 0 4px;
  border-bottom: 2px solid #2b78c6;
  white-space: nowrap;
}
.task.active {
  width: 106px;
  padding: 0 6px;
  background: #f2f2f2;
}
.tray {
  display: flex;
  align-items: center;
  gap: 4px;
  margin-left: auto;
}
.links {
  margin-right: 1px;
}
.lang {
  margin-left: 3px;
}
.tray time {
  display: flex;
  flex-direction: column;
  align-items: center;
  width: 44px;
  margin-right: 4px;
  line-height: 10px;
}
.cursor {
  position: absolute;
  left: 671px;
  top: 475px;
  width: 10px;
  height: 15px;
  stroke-width: 1;
}
</style>
